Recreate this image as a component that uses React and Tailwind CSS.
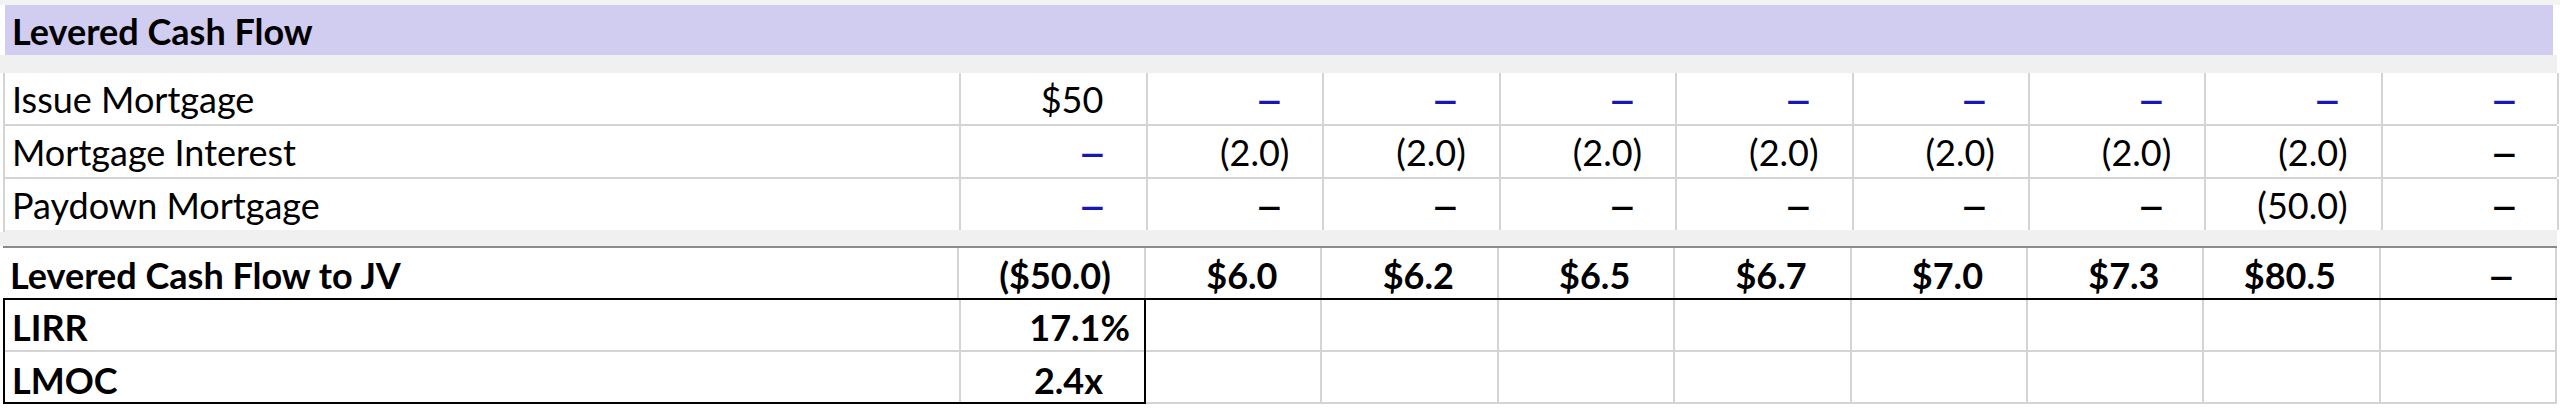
import React from 'react'

const DASH = '–'

const rows = [
  { label: 'Issue Mortgage', values: [['$50'], [DASH, 'blue'], [DASH, 'blue'], [DASH, 'blue'], [DASH, 'blue'], [DASH, 'blue'], [DASH, 'blue'], [DASH, 'blue'], [DASH, 'blue']] },
  { label: 'Mortgage Interest', values: [[DASH, 'blue'], ['(2.0)'], ['(2.0)'], ['(2.0)'], ['(2.0)'], ['(2.0)'], ['(2.0)'], ['(2.0)'], [DASH]] },
  { label: 'Paydown Mortgage', values: [[DASH, 'blue'], [DASH], [DASH], [DASH], [DASH], [DASH], [DASH], ['(50.0)'], [DASH]] },
]

const totals = ['($50.0)', '$6.0', '$6.2', '$6.5', '$6.7', '$7.0', '$7.3', '$80.5', DASH]

const gridCols = 'grid grid-cols-[956px_187px_repeat(8,176.4px)]'

const Num = ({ value, color }) => {
  const paren = value.startsWith('(')
  const dash = value === DASH
  return (
    <span className={color === 'blue' ? 'text-[#1717b3]' : 'text-black'}>
      {dash ? <span className="inline-block font-bold scale-x-140">{value}</span> : value}
      {!paren && <span className="invisible">)</span>}
    </span>
  )
}

const Cell = ({ children, className = '' }) => (
  <div className={`flex items-end justify-end pr-[33px] border-r-2 border-[#d4d4d4] ${className}`}>
    {children}
  </div>
)

export default function App() {
  return (
    <div className="w-[2560px] h-[409px] bg-white text-black text-[36px] leading-none overflow-hidden" style={{ fontFamily: 'Lato, "Liberation Sans", sans-serif' }}>
      <div className="h-[5px] bg-[#f3f3f3]" />
      <div className="h-[50px] flex bg-white">
        <div className="ml-[5px] w-[2548px] bg-[#d0cdf0] flex items-end pl-[7px] pb-[6px] font-bold">
          Levered Cash Flow
        </div>
      </div>
      <div className="h-[18px] bg-[#f0f0f0] w-[2557px]" />

      <div className="ml-[3px] border-l-2 border-[#d4d4d4] w-[2554px]">
        {rows.map((row, i) => (
          <div key={row.label} className={`${gridCols} h-[53px] border-b-2 ${i === rows.length - 1 ? 'border-[#f0f0f0]' : 'border-[#d4d4d4]'}`}>
            <div className="flex items-end pl-[7px] pb-[7px] border-r-2 border-[#d4d4d4]">{row.label}</div>
            {row.values.map(([v, c], j) => (
              <Cell key={j} className="pb-[7px]">
                <Num value={v} color={c} />
              </Cell>
            ))}
          </div>
        ))}
      </div>

      <div className="h-[14px] bg-[#f0f0f0] w-[2557px]" />

      <div className={`${gridCols} ml-[3px] w-[2554px] h-[54px] border-t-2 border-t-[#8a8a8a] border-b-2 border-b-black font-bold`}>
        <div className="flex items-end pl-[7px] pb-[5px] border-r-2 border-[#d4d4d4]">Levered Cash Flow to JV</div>
        {totals.map((v, j) => (
          <Cell key={j} className="pb-[5px]">
            <Num value={v} />
          </Cell>
        ))}
      </div>

      <div className="flex ml-[3px] w-[2554px]">
        <div className="w-[1143px] border-l-2 border-r-2 border-b-2 border-black font-bold">
          <div className="grid grid-cols-[956px_185px] h-[52px] border-b-2 border-[#d4d4d4]">
            <div className="flex items-end pl-[7px] pb-[5px] border-r-2 border-[#d4d4d4]">LIRR</div>
            <div className="flex items-end justify-end pr-[16px] pb-[5px]">17.1%</div>
          </div>
          <div className="grid grid-cols-[956px_185px] h-[50px]">
            <div className="flex items-end pl-[7px] pb-[4px] border-r-2 border-[#d4d4d4]">LMOC</div>
            <div className="flex items-end justify-end pr-[43px] pb-[4px]">2.4x</div>
          </div>
        </div>
        <div className="grid grid-cols-[repeat(8,176.4px)]">
          {[0, 1].map((r) => (
            <React.Fragment key={r}>
              {Array.from({ length: 8 }).map((_, j) => (
                <div key={j} className="h-[52px] border-r-2 border-b-2 border-[#d4d4d4]" />
              ))}
            </React.Fragment>
          ))}
        </div>
      </div>
    </div>
  )
}
